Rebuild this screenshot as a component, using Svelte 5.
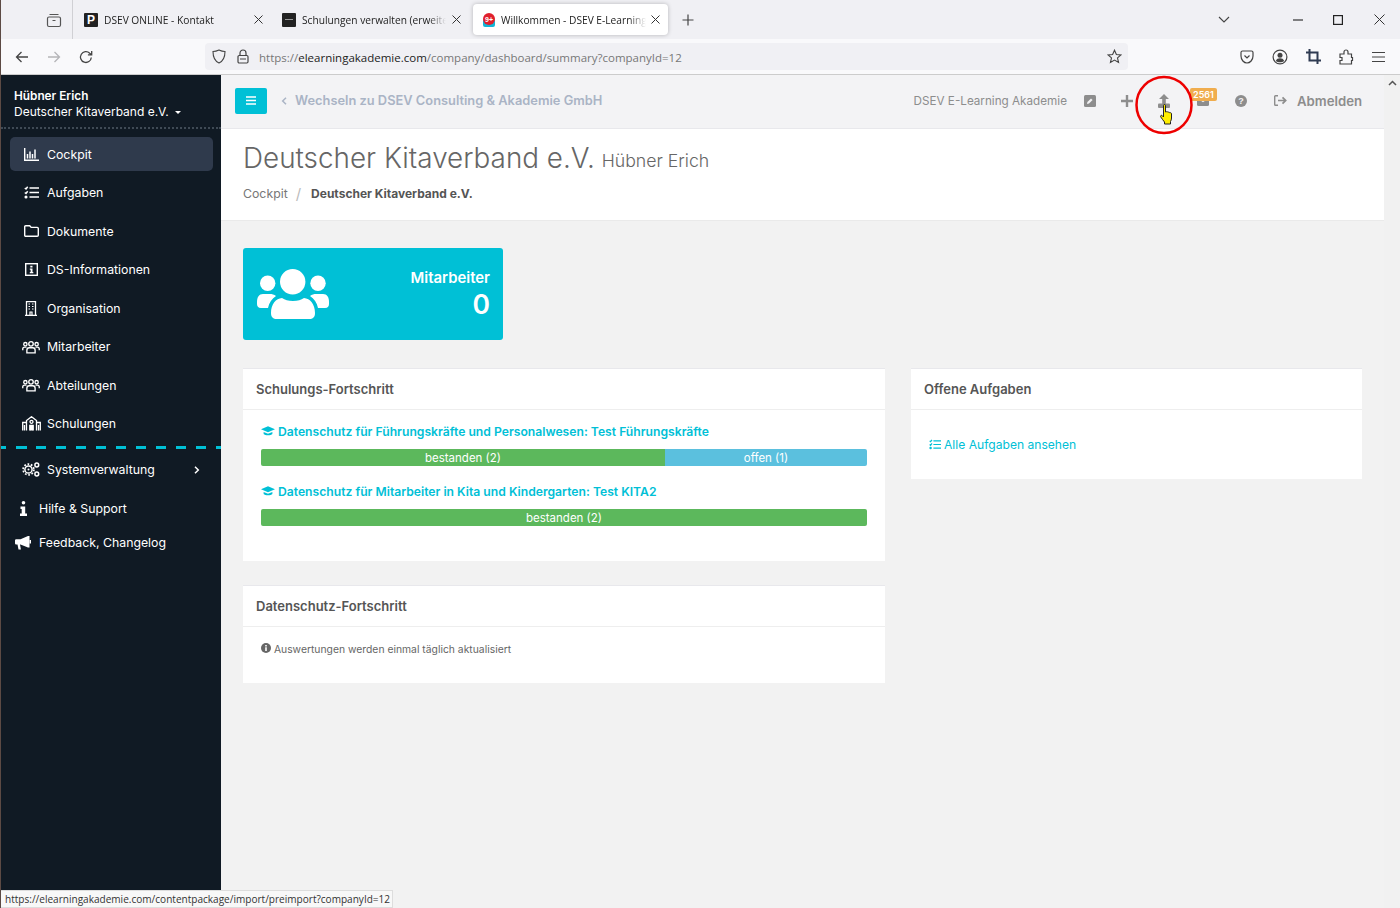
<script>
  const nav = [
    { label: 'Cockpit', icon: 'chart', active: true },
    { label: 'Aufgaben', icon: 'tasks' },
    { label: 'Dokumente', icon: 'folder' },
    { label: 'DS-Informationen', icon: 'info' },
    { label: 'Organisation', icon: 'building' },
    { label: 'Mitarbeiter', icon: 'users' },
    { label: 'Abteilungen', icon: 'users' },
    { label: 'Schulungen', icon: 'school' }
  ];
  const cap = 'M12 2 0 7l12 5 12-5zM4.500 11.500V15c2.500 3 12.500 3 15 0v-3.500L12 14.500z';
</script>

<div class="window">
  <div class="tabstrip">
    <div class="view-btn">
      <svg width="16" height="16" viewBox="0 0 16 16" fill="none" stroke="#555" stroke-width="1.200"><rect x="1.500" y="5" width="13" height="9.500" rx="1.500"/><path d="M3.500 2.500h9M6.500 8.500h3"/></svg>
    </div>
    <div class="tab">
      <span class="fav dark"><b>P</b></span>
      <span class="tab-title">DSEV ONLINE - Kontakt</span>
      <svg class="tab-x" width="9" height="9" viewBox="0 0 9 9" stroke="#333" stroke-width="1"><path d="m.5.5 8 8M8.500.5l-8 8"/></svg>
    </div>
    <div class="tab">
      <span class="fav dark"><i></i></span>
      <span class="tab-title">Schulungen verwalten (erweitert)</span>
      <svg class="tab-x" width="9" height="9" viewBox="0 0 9 9" stroke="#333" stroke-width="1"><path d="m.5.5 8 8M8.500.5l-8 8"/></svg>
    </div>
    <div class="tab active">
      <span class="fav">
        <svg width="14" height="14" viewBox="0 0 14 14"><rect x="1" y="6" width="12" height="8" rx="2" fill="#12b5d6"/><circle cx="7" cy="6" r="6" fill="#e0202c"/><text x="7" y="8.500" font-size="7" font-weight="700" text-anchor="middle" fill="#fff" font-family="Liberation Sans, sans-serif">9+</text></svg>
      </span>
      <span class="tab-title">Willkommen - DSEV E-Learning Akademie</span>
      <svg class="tab-x" width="9" height="9" viewBox="0 0 9 9" stroke="#333" stroke-width="1"><path d="m.5.5 8 8M8.500.5l-8 8"/></svg>
    </div>
    <svg class="new-tab" width="12" height="12" viewBox="0 0 12 12" stroke="#444" stroke-width="1.200"><path d="M6 .5v11M.5 6h11"/></svg>
    <div class="win-controls">
      <svg class="chev" width="12" height="8" viewBox="0 0 12 8" fill="none" stroke="#444" stroke-width="1.100"><path d="m1 1 5 5 5-5"/></svg>
      <svg class="ctl-min" width="10" height="10" viewBox="0 0 10 10" stroke="#333" stroke-width="1.200"><path d="M0 5h10"/></svg>
      <svg class="ctl-max" width="10" height="10" viewBox="0 0 10 10" fill="none" stroke="#222" stroke-width="1.200"><rect x=".6" y=".6" width="8.800" height="8.800"/></svg>
      <svg class="ctl-close" width="11" height="11" viewBox="0 0 11 11" stroke="#333" stroke-width="1"><path d="m.5.5 10 10M10.500.5l-10 10"/></svg>
    </div>
  </div>

  <div class="navbar">
    <svg class="nb-back" width="14" height="14" viewBox="0 0 14 14" fill="none" stroke="#444" stroke-width="1.300"><path d="M13 7H1.500M6.500 2l-5 5 5 5"/></svg>
    <svg class="nb-fwd" width="14" height="14" viewBox="0 0 14 14" fill="none" stroke="#b5b5b8" stroke-width="1.300"><path d="M1 7h11.500M7.500 2l5 5-5 5"/></svg>
    <svg class="nb-reload" width="14" height="14" viewBox="0 0 14 14" fill="none" stroke="#444" stroke-width="1.300"><path d="M12.300 7.500a5.400 5.400 0 1 1-1.600-4.300l1.800 1.500M12.700 1v3.800H8.900"/></svg>
    <div class="urlbar">
      <svg width="14" height="15" viewBox="0 0 14 15" fill="none" stroke="#444" stroke-width="1.100"><path d="M7 1c2 1 4 1.500 6 1.500 0 5-1.500 9.500-6 11.500C2.500 12 1 7.500 1 2.500 3 2.500 5 2 7 1z"/></svg>
      <svg class="lock" width="12" height="15" viewBox="0 0 12 15" fill="none" stroke="#444" stroke-width="1.200"><rect x="1" y="6.500" width="10" height="7.500" rx="1.200"/><path d="M3 6.500V4a3 3 0 0 1 6 0v2.500M3 10h6"/></svg>
      <span class="url">https://<span class="host">elearningakademie.com</span>/company/dashboard/summary?companyId=12</span>
      <svg class="star" width="15" height="15" viewBox="0 0 16 16" fill="none" stroke="#444" stroke-width="1.200"><path d="m8 1.300 2 4.500 4.900.5-3.700 3.200 1.100 4.800L8 11.800l-4.300 2.500 1.100-4.800L1.100 6.300 6 5.800z"/></svg>
    </div>
    <div class="nb-tools">
      <svg width="14" height="14" viewBox="0 0 14 14" fill="none" stroke="#444" stroke-width="1.200"><path d="M1 2.500C1 1.700 1.700 1 2.500 1h9c.8 0 1.500.7 1.500 1.500V6c0 4-3 7-6 7s-6-3-6-7z"/><path d="m4.500 5.500 2.500 2.500 2.500-2.500"/></svg>
      <svg width="16" height="16" viewBox="0 0 16 16"><circle cx="8" cy="8" r="6.900" fill="none" stroke="#444" stroke-width="1.200"/><circle cx="8" cy="6.300" r="2.500" fill="#444"/><path d="M3.800 12c.8-2 2.200-2.700 4.200-2.700s3.400.7 4.200 2.700c-2 1.700-6.400 1.700-8.400 0z" fill="#444"/></svg>
      <svg width="15" height="15" viewBox="0 0 15 15" fill="none" stroke="#2f3b52" stroke-width="2"><path d="M3.500 0v11.500H15M0 3.500h11.500V15"/></svg>
      <svg width="15" height="16" viewBox="0 0 15 16" fill="none" stroke="#444" stroke-width="1.200"><path d="M1 5h4V3a2 2 0 0 1 4 0v2h3.500v3.500h1v3h-1V15H1v-3.500h2V8.500H1z"/></svg>
      <svg width="13" height="12" viewBox="0 0 13 12" stroke="#444" stroke-width="1.200"><path d="M0 1.500h13M0 6h13M0 10.500h13"/></svg>
    </div>
  </div>

  <div class="page">
    <aside class="sidebar">
      <div class="user">
        <div class="user-name">Hübner Erich</div>
        <div class="user-org">Deutscher Kitaverband e.V. <span class="caret"></span></div>
      </div>
      <ul class="menu">
        {#each nav as item}
          <li class:active={item.active}>
            <span class="menu-icon">
              {#if item.icon === 'chart'}
                <svg width="15" height="13" viewBox="0 0 15 13" fill="none" stroke="#fff"><path d="M.7 0v12.300H15" stroke-width="1.400"/><path d="M3.500 6v4.500M6 3.500v7M8.500 6v4.500M11 1.500v9" stroke-width="1.500"/></svg>
              {:else if item.icon === 'tasks'}
                <svg width="15" height="13" viewBox="0 0 15 13" fill="none" stroke="#fff" stroke-width="1.500"><path d="M5.500 2h9.500M5.500 6.500h9.500M5.500 11h9.500M.8 2 2 3l1.700-2.300M.8 6.500 2 7.500l1.700-2.300"/><circle cx="2" cy="11" r=".8"/></svg>
              {:else if item.icon === 'folder'}
                <svg width="15" height="12" viewBox="0 0 15 12" fill="none" stroke="#fff" stroke-width="1.400"><path d="M.7 1.700c0-.5.400-1 1-1h4l1.500 1.700h6c.6 0 1.100.5 1.100 1v6.900c0 .5-.5 1-1.100 1H1.700c-.6 0-1-.5-1-1z"/></svg>
              {:else if item.icon === 'info'}
                <svg width="13" height="13" viewBox="0 0 13 13"><rect x=".7" y=".7" width="11.600" height="11.600" fill="none" stroke="#fff" stroke-width="1.400"/><path d="M5.300 2.700h2.200v1.800H5.300zM4.800 5.500h2.700v3.500h.8v1.300H4.800V9h.8V6.800h-.8z" fill="#fff"/></svg>
              {:else if item.icon === 'building'}
                <svg width="12" height="15" viewBox="0 0 12 15" fill="none" stroke="#fff" stroke-width="1.300"><path d="M1.500.7h9v13.600h-9zM0 14.300h12"/><path d="M3.500 3h1.500M7 3h1.500M3.500 5.500h1.500M7 5.500h1.500M3.500 8h1.500M7 8h1.500M5 14v-3h2v3" stroke-width="1.200"/></svg>
              {:else if item.icon === 'users'}
                <svg width="18" height="14" viewBox="0 0 24 17.500" fill="none" stroke="#fff" stroke-width="1.800"><circle cx="4.500" cy="5" r="2.200"/><circle cx="19.500" cy="5" r="2.200"/><circle cx="12" cy="4.500" r="3"/><path d="M1 13v-1.500c0-1.500 1-2.500 2.500-2.500H6M23 13v-1.500c0-1.500-1-2.500-2.500-2.500H18M6.500 16.500v-3.500c0-2 1.500-3.200 3-3.200h5c1.500 0 3 1.200 3 3.200v3.500z"/></svg>
              {:else if item.icon === 'school'}
                <svg width="19" height="15" viewBox="0 0 19 15" fill="none" stroke="#fff" stroke-width="1.300"><path d="M4.500 14.500V4.500l5-3.800 5 3.800v10M.7 14.500V6.500h3.800M18.300 14.500V6.500h-3.800M2.500 9v5.500M16.500 9v5.500"/><circle cx="9.500" cy="5.800" r="1.500"/><path d="M7.800 14.500v-5h3.400v5" fill="#fff"/></svg>
              {/if}
            </span>
            <span>{item.label}</span>
          </li>
        {/each}
      </ul>
      <div class="dashes"></div>
      <ul class="menu lower">
        <li>
          <span class="menu-icon">
            <svg width="18" height="15" viewBox="0 0 18 15" fill="none" stroke="#fff"><circle cx="6.500" cy="7.500" r="3.600" stroke-width="1.500"/><circle cx="6.500" cy="7.500" r="5.400" stroke-width="1.700" stroke-dasharray="1.700 1.700"/><circle cx="6.500" cy="7.500" r="1" fill="#fff" stroke="none"/><circle cx="14.800" cy="3" r="1.900" stroke-width="1.500"/><circle cx="14.800" cy="12" r="1.900" stroke-width="1.500"/></svg>
          </span>
          <span>Systemverwaltung</span>
          <svg class="arrow" width="6" height="8" viewBox="0 0 6 8" fill="none" stroke="#fff" stroke-width="1.500"><path d="m1 .8 3.300 3.200L1 7.200"/></svg>
        </li>
      </ul>
      <ul class="menu extra">
        <li>
          <span class="menu-icon">
            <svg width="7" height="15" viewBox="0 0 7 15" fill="#fff"><circle cx="3.500" cy="1.800" r="1.800"/><path d="M.5 5.500h4.700v7H7V15H0v-2.500h1.700V8H.5z"/></svg>
          </span>
          <span>Hilfe &amp; Support</span>
        </li>
        <li>
          <span class="menu-icon">
            <svg width="16" height="14" viewBox="0 0 16 14" fill="#fff"><path d="M0 4.500C0 3.700.6 3.200 1.500 3.200h4L13 0h1.500v11.500H13L5.500 8.500H5l.9 5H3.500l-1-5h-1C.6 8.500 0 8 0 7z"/><rect x="14.500" y="4" width="1.500" height="3.500"/></svg>
          </span>
          <span>Feedback, Changelog</span>
        </li>
      </ul>
    </aside>

    <main class="main">
      <header class="topbar">
        <button class="burger" aria-label="Menü">
          <svg width="10" height="9" viewBox="0 0 10 9" stroke="#fff" stroke-width="1.700"><path d="M0 1h10M0 4.500h10M0 8h10"/></svg>
        </button>
        <svg class="switch-arrow" width="6" height="8" viewBox="0 0 6 8" fill="none" stroke="#aab4c5" stroke-width="1.500"><path d="M5 .8 1.700 4 5 7.200"/></svg>
        <span class="switch">Wechseln zu DSEV Consulting &amp; Akademie GmbH</span>
        <div class="top-right">
          <span class="academy">DSEV E-Learning Akademie</span>
          <svg class="ic-edit" width="12" height="12" viewBox="0 0 12 12"><rect width="12" height="12" rx="1.500" fill="#8d8d8d"/><path d="m3 9 .4-2 3.600-3.600 1.600 1.600L5 8.600z" fill="#f3f3f5"/></svg>
          <svg class="ic-plus" width="12" height="12" viewBox="0 0 12 12"><path d="M6 0v12M0 6h12" stroke="#8d8d8d" stroke-width="2.400"/></svg>
          <svg class="ic-upload" width="12" height="14" viewBox="0 0 12 14" fill="#8d8d8d"><path d="M6 0 1 5h3.200v5h3.600V5H11z"/><rect y="9.500" width="12" height="4.500" rx="1"/></svg>
          <div class="mail">
            <svg width="12" height="10" viewBox="0 0 12 10"><rect width="12" height="10" rx="1.500" fill="#8d8d8d"/><path d="m1 2 5 3.500L11 2" fill="none" stroke="#f3f3f5" stroke-width="1.100"/></svg>
            <span class="badge">2561</span>
          </div>
          <svg class="ic-help" width="12" height="12" viewBox="0 0 12 12"><circle cx="6" cy="6" r="6" fill="#8d8d8d"/><text x="6" y="9.200" font-size="9" font-weight="700" text-anchor="middle" fill="#f3f3f5" font-family="Liberation Sans, sans-serif">?</text></svg>
          <svg class="ic-out" width="13" height="11" viewBox="0 0 13 11" fill="none" stroke="#8d8d8d" stroke-width="1.400"><path d="M4 .8H1.500C1 .8.700 1.100.700 1.600v7.800c0 .5.300.8.800.8H4"/><path d="M4 5.500h7.500M8.500 2.300l3.200 3.200-3.200 3.200" stroke-width="1.700"/></svg>
          <span class="logout">Abmelden</span>
        </div>
      </header>

      <section class="title-area">
        <h1>Deutscher Kitaverband e.V. <small>Hübner Erich</small></h1>
        <nav class="crumbs">
          <span>Cockpit</span>
          <span class="sep">/</span>
          <strong>Deutscher Kitaverband e.V.</strong>
        </nav>
      </section>

      <div class="content">
        <div class="stat">
          <svg width="72" height="50" viewBox="0 0 72 50" fill="#fff">
            <circle cx="35.700" cy="12.700" r="12.700"/>
            <circle cx="10.700" cy="14.300" r="7.700"/>
            <circle cx="61" cy="14.300" r="7.700"/>
            <path d="M0 33c0-5 2-8 6-8h7c2 0 4 .5 6 2-4 2.500-7 6.500-8 12H4c-3 0-4-2-4-4zM72 33c0-5-2-8-6-8h-7c-2 0-4 .5-6 2 4 2.500 7 6.500 8 12h7c3 0 4-2 4-4z"/>
            <path d="M14 44c0-9 5-14.500 11-15 3 2 6 3 11 3s8-1 11-3c6 .5 11 6 11 15 0 4-2 6-6 6H20c-4 0-6-2-6-6z"/>
          </svg>
          <div class="stat-text">
            <div class="stat-label">Mitarbeiter</div>
            <div class="stat-value">0</div>
          </div>
        </div>

        <div class="grid">
          <div class="col">
            <section class="panel">
              <h2>Schulungs-Fortschritt</h2>
              <div class="panel-body progress-body">
                <a class="course">
                  <svg width="14" height="10" viewBox="0 2 24 16" fill="#00c0d6"><path d={cap}/></svg>
                  Datenschutz für Führungskräfte und Personalwesen: Test Führungskräfte
                </a>
                <div class="bar">
                  <div class="seg green" style="width: 66.667%">bestanden (2)</div>
                  <div class="seg blue" style="width: 33.333%">offen (1)</div>
                </div>
                <a class="course">
                  <svg width="14" height="10" viewBox="0 2 24 16" fill="#00c0d6"><path d={cap}/></svg>
                  Datenschutz für Mitarbeiter in Kita und Kindergarten: Test KITA2
                </a>
                <div class="bar">
                  <div class="seg green" style="width: 100%">bestanden (2)</div>
                </div>
              </div>
            </section>
            <section class="panel">
              <h2>Datenschutz-Fortschritt</h2>
              <div class="panel-body note-body">
                <svg width="10" height="10" viewBox="0 0 10 10"><circle cx="5" cy="5" r="5" fill="#666"/><path d="M4.200 2h1.600v1.400H4.200zM4.200 4.300h1.600V8H4.200z" fill="#fff"/></svg>
                Auswertungen werden einmal täglich aktualisiert
              </div>
            </section>
          </div>
          <section class="panel side">
            <h2>Offene Aufgaben</h2>
            <div class="panel-body tasks-body">
              <svg width="12" height="11" viewBox="0 0 15 13" fill="none" stroke="#00c0d6" stroke-width="1.500"><path d="M5.500 2h9.500M5.500 6.500h9.500M5.500 11h9.500M.8 2 2 3l1.700-2.300M.8 6.500 2 7.500l1.700-2.300"/><circle cx="2" cy="11" r=".8"/></svg>
              <a>Alle Aufgaben ansehen</a>
            </div>
          </section>
        </div>
      </div>
    </main>

    <div class="scrollbar">
      <svg width="9" height="6" viewBox="0 0 9 6" fill="none" stroke="#555" stroke-width="1.500"><path d="m1 5 3.500-3.500L8 5"/></svg>
    </div>
  </div>

  <div class="status">https://elearningakademie.com/contentpackage/import/preimport?companyId=12</div>

  <svg class="highlight" width="60" height="62" viewBox="0 0 60 62"><ellipse cx="30" cy="31" rx="27.500" ry="28" fill="none" stroke="#ee0000" stroke-width="2.500"/></svg>
  <svg class="hand" width="15" height="21" viewBox="0 0 15 21"><path d="M4.500 1.500c0-1.300 2-1.300 2 0V8l1-.3c.7-.2 1.200.2 1.500.6.800-.4 1.500-.1 1.700.5.800-.3 1.800 0 1.800 1V14c0 1.500-.5 2.500-1 3.500v2.500H5.500v-2c-1-1.300-2.500-3-3.700-5-.7-1.300.5-2.300 1.500-1.300L4.500 13z" fill="#ffee00" stroke="#222" stroke-width="1"/></svg>
</div>

<style>
  :global(body) {
    margin: 0;
    background: #f2f2f2;
  }

  .window {
    position: relative;
    width: 1400px;
    height: 908px;
    overflow: hidden;
    display: flex;
    flex-direction: column;
    font-family: Inter, "Liberation Sans", sans-serif;
    border-left: 1px solid #5c4a44;
    box-sizing: border-box;
  }

  /* browser chrome */
  .tabstrip {
    height: 39px;
    flex: none;
    display: flex;
    align-items: center;
    background: #f0f0f4;
    font-family: "Open Sans", sans-serif;
    font-size: 10.200px;
    color: #222;
  }

  .view-btn {
    width: 72px;
    height: 39px;
    box-sizing: border-box;
    border-right: 1px solid #d0d0d4;
    padding: 12px 0 0 45px;
  }

  .tab {
    width: 198px;
    height: 31px;
    box-sizing: border-box;
    padding: 0 8px 0 11px;
    display: flex;
    align-items: center;
    gap: 6px;
  }

  .tab.active {
    width: 195px;
    margin-left: 4px;
    background: #fff;
    border-radius: 4px;
    box-shadow: 0 0 4px rgba(0, 0, 0, 0.25);
    padding: 0 8px 0 9px;
    gap: 5px;
  }

  .fav {
    width: 14px;
    height: 14px;
    flex: none;
    display: flex;
    align-items: center;
    justify-content: center;
    font-family: "Liberation Sans", sans-serif;
    font-size: 12px;
    color: #fff;
  }

  .fav.dark {
    background: #222;
    border-radius: 1px;
  }

  .fav i {
    width: 8px;
    height: 1px;
    background: #999;
  }

  .tab-title {
    flex: 1;
    min-width: 0;
    overflow: hidden;
    white-space: nowrap;
    mask-image: linear-gradient(to right, #000 88%, transparent);
  }

  .tab-x {
    flex: none;
  }

  .new-tab {
    margin-left: 14px;
  }

  .win-controls {
    margin-left: auto;
    display: flex;
    align-items: center;
    padding-right: 15px;
  }

  .ctl-min {
    margin-left: 63px;
  }

  .ctl-max {
    margin-left: 30px;
  }

  .ctl-close {
    margin-left: 31px;
  }

  .navbar {
    height: 36px;
    flex: none;
    box-sizing: border-box;
    display: flex;
    align-items: center;
    background: #f9f9fb;
    border-bottom: 1px solid #ccc;
    padding-left: 14px;
  }

  .nb-fwd {
    margin-left: 18px;
  }

  .nb-reload {
    margin-left: 18px;
  }

  .urlbar {
    width: 923px;
    height: 27px;
    margin-left: 112px;
    box-sizing: border-box;
    padding: 0 6px 0 7px;
    display: flex;
    align-items: center;
    background: #f0f0f4;
    border-radius: 4px;
    font-family: "Open Sans", sans-serif;
    font-size: 11.500px;
    color: #777;
  }

  .lock {
    margin-left: 11px;
  }

  .url {
    margin-left: 10px;
    padding-top: 1px;
    white-space: nowrap;
  }

  .host {
    color: #222;
  }

  .star {
    margin-left: auto;
  }

  .nb-tools {
    display: flex;
    align-items: center;
    gap: 18px;
    margin-left: 112px;
  }

  /* page */
  .page {
    flex: 1;
    min-height: 0;
    display: flex;
  }

  .sidebar {
    width: 220px;
    flex: none;
    background: #101a24;
    color: #fff;
    font-size: 12.300px;
  }

  .user {
    height: 54px;
    box-sizing: border-box;
    padding: 13px 0 0 13px;
    border-bottom: 2px dotted #3f4a55;
    line-height: 16px;
  }

  .user-name {
    font-weight: 600;
    font-size: 11.800px;
  }

  .user-org {
    font-size: 12px;
  }

  .caret {
    display: inline-block;
    margin: 0 0 2px 3px;
    border: 3.500px solid transparent;
    border-top-color: #fff;
    border-bottom: 0;
  }

  .menu {
    list-style: none;
    margin: 0;
    padding: 8px 8px 0 9px;
    display: flex;
    flex-direction: column;
    gap: 4.500px;
  }

  .menu li {
    height: 34px;
    display: flex;
    align-items: center;
    border-radius: 5px;
    padding-left: 11px;
  }

  .menu li.active {
    background: #2f3a4c;
  }

  .menu-icon {
    width: 20px;
    margin-right: 6px;
    display: flex;
    justify-content: center;
  }

  .dashes {
    height: 3px;
    margin-top: 5px;
    background: repeating-linear-gradient(90deg, #00c0d6 0 5.500px, transparent 5.500px 15px, #00c0d6 15px 20px);
  }

  .menu.lower {
    padding-top: 4px;
  }

  .arrow {
    margin-left: auto;
    margin-right: 13px;
  }

  .menu.extra {
    padding-top: 5px;
    gap: 0;
  }

  .menu.extra li {
    padding-left: 3px;
  }

  .main {
    flex: 1;
    min-width: 0;
    background: #f2f2f2;
  }

  .topbar {
    height: 54px;
    box-sizing: border-box;
    padding: 0 22px 2px 14px;
    display: flex;
    align-items: center;
    background: #f3f3f5;
    border-bottom: 1px solid #e8e8ec;
  }

  .burger {
    width: 32px;
    height: 26px;
    border: none;
    border-radius: 2px;
    background: #00c0d6;
    padding: 0;
    display: flex;
    align-items: center;
    justify-content: center;
  }

  .switch-arrow {
    margin-left: 14px;
  }

  .switch {
    margin-left: 8px;
    font-size: 12.850px;
    font-weight: 600;
    color: #aab4c5;
  }

  .top-right {
    margin-left: auto;
    display: flex;
    align-items: center;
    color: #8d8d8d;
  }

  .academy {
    font-size: 11.700px;
  }

  .ic-edit {
    margin-left: 17px;
  }

  .ic-plus,
  .ic-upload {
    margin-left: 25px;
  }

  .mail {
    position: relative;
    display: flex;
    margin-left: 27px;
  }

  .badge {
    position: absolute;
    left: -7px;
    top: -8px;
    width: 27px;
    height: 13px;
    border-radius: 2px;
    background: #f0ad4e;
    color: #fff;
    font-size: 9px;
    font-weight: 600;
    line-height: 13px;
    text-align: center;
  }

  .ic-help {
    margin-left: 26px;
  }

  .ic-out {
    margin-left: 27px;
  }

  .logout {
    margin-left: 10px;
    font-size: 13.200px;
    font-weight: 600;
  }

  .title-area {
    height: 92px;
    box-sizing: border-box;
    padding: 10px 22px 0;
    background: #fff;
    border-bottom: 1px solid #eaeaea;
  }

  h1 {
    margin: 0;
    font-size: 27.850px;
    font-weight: 300;
    line-height: 38px;
    color: #666;
  }

  small {
    margin-left: -1px;
    font-size: 17.700px;
    font-weight: 300;
    vertical-align: 1px;
  }

  .crumbs {
    margin-top: 4px;
    display: flex;
    align-items: center;
    font-size: 12.300px;
    color: #777;
  }

  .sep {
    margin: 0 10px 0 8px;
    color: #bbb;
    font-size: 15px;
  }

  .crumbs strong {
    color: #555;
    font-size: 12px;
    font-weight: 700;
  }

  .content {
    padding: 27px 22px 0;
  }

  .stat {
    width: 260px;
    height: 92px;
    box-sizing: border-box;
    padding: 0 13px 0 14px;
    display: flex;
    align-items: center;
    justify-content: space-between;
    border-radius: 3px;
    background: #00c0d6;
    color: #fff;
    text-align: right;
  }

  .stat-label {
    padding-top: 1px;
    font-size: 14.900px;
    font-weight: 600;
  }

  .stat-value {
    font-size: 26.500px;
    font-weight: 600;
    line-height: 34px;
  }

  .grid {
    margin-top: 28px;
    display: grid;
    grid-template-columns: 642px 451px;
    gap: 26px;
    align-items: start;
  }

  .col {
    display: flex;
    flex-direction: column;
    gap: 24px;
  }

  .panel {
    background: #fff;
    border-top: 1px solid #e8e8ec;
  }

  h2 {
    margin: 0;
    height: 41px;
    box-sizing: border-box;
    padding: 0 13px;
    font-size: 13px;
    font-weight: 600;
    line-height: 40px;
    color: #555;
    border-bottom: 1px solid #eee;
  }

  .panel-body {
    padding: 0 18px;
  }

  .progress-body {
    height: 151px;
    padding-top: 13px;
    box-sizing: border-box;
  }

  .course {
    display: flex;
    align-items: center;
    gap: 3px;
    height: 16px;
    font-size: 12.170px;
    font-weight: 600;
    color: #00c0d6;
    white-space: nowrap;
  }

  .bar {
    height: 17px;
    margin: 10px 0 17px;
    display: flex;
    overflow: hidden;
    border-radius: 2px;
  }

  .seg {
    font-size: 11.500px;
    line-height: 18px;
    text-align: center;
    color: #fff;
  }

  .green {
    background: #5cb85c;
  }

  .blue {
    background: #5bc0de;
  }

  .note-body {
    height: 56px;
    box-sizing: border-box;
    padding-top: 16px;
    font-size: 10.350px;
    color: #666;
  }

  .tasks-body {
    height: 69px;
    box-sizing: border-box;
    display: flex;
    align-items: center;
    gap: 3px;
    font-size: 12.100px;
    color: #00c0d6;
  }

  .scrollbar {
    width: 16px;
    flex: none;
    background: #f1f1f1;
    display: flex;
    justify-content: center;
    padding-top: 5px;
    box-sizing: border-box;
  }

  .scrollbar svg {
    flex: none;
  }

  /* overlays: browser status tooltip and the screenshot annotation */
  .status {
    position: absolute;
    left: 0;
    bottom: 0;
    width: 392px;
    height: 18px;
    box-sizing: border-box;
    padding-left: 4px;
    background: #f8f8f8;
    border: 1px solid #ddd;
    border-left: none;
    font-family: "Open Sans", sans-serif;
    font-size: 10.050px;
    line-height: 16px;
    color: #333;
    white-space: nowrap;
  }

  .highlight {
    position: absolute;
    left: 1133px;
    top: 74px;
  }

  .hand {
    position: absolute;
    left: 1158px;
    top: 104px;
  }
</style>
